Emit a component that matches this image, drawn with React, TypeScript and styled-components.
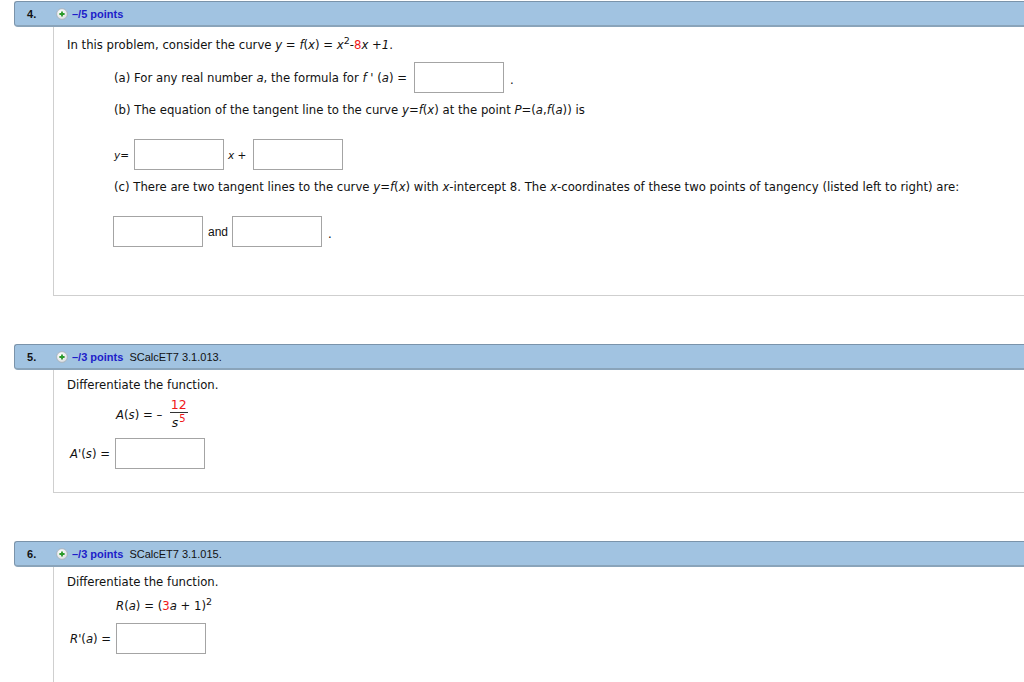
import React from "react";
import styled, { createGlobalStyle } from "styled-components";

const GlobalStyle = createGlobalStyle`
  html, body {
    margin: 0;
    padding: 0;
    background: #ffffff;
    overflow: hidden;
  }
  body {
    font-family: "DejaVu Sans", Verdana, sans-serif;
    font-size: 11.7px;
    color: #111;
  }
`;

// ---------- small pieces ----------

function PlusIcon() {
  return (
    <svg width="12" height="12" viewBox="0 0 12 12">
      <defs>
        <radialGradient id="plusbg" cx="0.4" cy="0.35" r="0.7">
          <stop offset="0" stopColor="#ffffff" />
          <stop offset="1" stopColor="#d8dce0" />
        </radialGradient>
      </defs>
      <circle cx="6" cy="6" r="5.4" fill="url(#plusbg)" stroke="#a4aeb8" strokeWidth="0.8" />
      <path d="M6 3.4v5.2M3.4 6h5.2" stroke="#2a9a2a" strokeWidth="1.8" />
    </svg>
  );
}

interface QuestionProps {
  num: number;
  points: number;
  code?: string;
  top: number;
  padTop: number;
  bodyHeight: number;
  closed?: boolean;
  children: React.ReactNode;
}

function Question({ num, points, code, top, padTop, bodyHeight, closed = true, children }: QuestionProps) {
  return (
    <QuestionWrap $top={top}>
      <Header>
        <Num>{num}.</Num>
        <PlusIcon />
        <Points>–/{points} points</Points>
        {code && <Code>{code}</Code>}
      </Header>
      <Body $padTop={padTop} $height={bodyHeight} $closed={closed}>
        {children}
      </Body>
    </QuestionWrap>
  );
}

function Frac({ num, den }: { num: React.ReactNode; den: React.ReactNode }) {
  return (
    <FracBox>
      <FracNum>{num}</FracNum>
      <FracDen>{den}</FracDen>
    </FracBox>
  );
}

export default function App() {
  return (
    <>
      <GlobalStyle />
      <Page>
        <Question num={4} points={5} top={1} padTop={11} bodyHeight={269}>
          <Line>
            In this problem, consider the curve <I>y</I> = <I>f</I>(<I>x</I>) ={" "}
            <I>x</I>
            <Sup>2</Sup>-<Red>8</Red>
            <I>x</I> +<I>1</I>.
          </Line>
          <Row $indent={47} $mt={10}>
            (a) For any real number <I>a</I>, the formula for <I>f</I> ' (<I>a</I>) =
            <Answer $ml={7} />
            <Dot />
          </Row>
          <Line $indent={47} $mt={10}>
            (b) The equation of the tangent line to the curve <I>y</I>=<I>f</I>(<I>x</I>) at the
            point <I>P</I>=(<I>a</I>,<I>f</I>(<I>a</I>)) is
          </Line>
          <Row $indent={47} $mt={22}>
            <Small><I>y</I>=</Small>
            <Answer $ml={5} />
            <Small $ml={4}><I>x</I> +</Small>
            <Answer $ml={7} />
          </Row>
          <Line $indent={47} $mt={10}>
            (c) There are two tangent lines to the curve <I>y</I>=<I>f</I>(<I>x</I>) with{" "}
            <I>x</I>-intercept 8. The <I>x</I>-coordinates of these two points of tangency (listed
            left to right) are:
          </Line>
          <Row $indent={46} $mt={22}>
            <Answer />
            <AndLabel>and</AndLabel>
            <Answer />
            <Dot />
          </Row>
        </Question>

        <Question num={5} points={3} code="SCalcET7 3.1.013." top={48} padTop={8} bodyHeight={123}>
          <Line>Differentiate the function.</Line>
          <Row $indent={49} $mt={6}>
            <I>A</I>(<I>s</I>) = –&nbsp;&nbsp;
            <Frac
              num={<Red>12</Red>}
              den={
                <>
                  <I>s</I>
                  <SupRed>5</SupRed>
                </>
              }
            />
          </Row>
          <Row $indent={3} $mt={7}>
            <I>A</I>'(<I>s</I>) =
            <Answer $ml={5} />
          </Row>
        </Question>

        <Question num={6} points={3} code="SCalcET7 3.1.015." top={48} padTop={8} bodyHeight={120} closed={false}>
          <Line>Differentiate the function.</Line>
          <Line $indent={49} $mt={10}>
            <I>R</I>(<I>a</I>) = (<Red>3</Red>
            <I>a</I> + 1)
            <Sup>2</Sup>
          </Line>
          <Row $indent={3} $mt={10}>
            <I>R</I>'(<I>a</I>) =
            <Answer $ml={5} />
          </Row>
        </Question>
      </Page>
    </>
  );
}

// -------------------------- style --------------------------

const Page = styled.div`
  padding-left: 14px;
  width: 1010px;
  height: 682px;
  overflow: hidden;
`;

const QuestionWrap = styled.section<{ $top: number }>`
  margin-top: ${(p) => p.$top}px;
`;

const Header = styled.div`
  display: flex;
  align-items: center;
  gap: 4px;
  box-sizing: border-box;
  height: 26px;
  padding-left: 12px;
  background: #a1c3e1;
  border-top: 1px solid #7a93aa;
  border-left: 1px solid #7a93aa;
  border-bottom: 2px solid #8aa4ba;
  border-radius: 3px 0 0 4px;
  font-family: "Liberation Sans", Arial, sans-serif;
  font-size: 11px;
`;

const Num = styled.span`
  font-weight: bold;
  color: #111;
  width: 25px;
`;

const Points = styled.span`
  font-weight: bold;
  color: #1d1dc9;
`;

const Code = styled.span`
  color: #111;
  margin-left: 2px;
`;

const Body = styled.div<{ $padTop: number; $height: number; $closed: boolean }>`
  margin-left: 39px;
  box-sizing: border-box;
  height: ${(p) => p.$height}px;
  padding-top: ${(p) => p.$padTop}px;
  padding-left: 13px;
  border-left: 1px solid #cfcfcf;
  border-bottom: ${(p) => (p.$closed ? "1px solid #cfcfcf" : "none")};
  display: flex;
  flex-direction: column;
  align-items: flex-start;
`;

const Line = styled.div<{ $indent?: number; $mt?: number }>`
  line-height: 14px;
  margin-left: ${(p) => p.$indent ?? 0}px;
  margin-top: ${(p) => p.$mt ?? 0}px;
  white-space: nowrap;
`;

const Row = styled.div<{ $indent?: number; $mt?: number }>`
  display: flex;
  align-items: center;
  margin-left: ${(p) => p.$indent ?? 0}px;
  margin-top: ${(p) => p.$mt ?? 0}px;
  white-space: pre;
  line-height: 14px;
`;

const I = styled.i`
  font-style: italic;
`;

const Red = styled.span`
  color: #f01818;
`;

const Sup = styled.sup`
  font-size: 9.5px;
  line-height: 0;
  vertical-align: 5px;
`;

const SupRed = styled.span`
  color: #f01818;
  font-size: 10px;
  position: relative;
  top: -5px;
  margin-left: 1px;
`;

const Small = styled.span<{ $ml?: number }>`
  font-size: 10.5px;
  margin-left: ${(p) => p.$ml ?? 0}px;
`;

const Answer = styled.div<{ $ml?: number }>`
  box-sizing: border-box;
  width: 90px;
  height: 31px;
  margin-left: ${(p) => p.$ml ?? 0}px;
  border: 1px solid #a4a4a4;
  background: #fff;
`;

const Dot = styled.span`
  &::before {
    content: ".";
  }
  margin-left: 6px;
  padding-top: 4px;
`;

const AndLabel = styled.span`
  font-family: "Liberation Sans", Arial, sans-serif;
  font-size: 12px;
  margin: 0 4px 0 5px;
`;

const FracBox = styled.span`
  display: inline-flex;
  flex-direction: column;
  align-items: center;
`;

const FracNum = styled.span`
  font-size: 12.5px;
  line-height: 13px;
  padding: 0 1px 1px;
  border-bottom: 1px solid #333;
`;

const FracDen = styled.span`
  font-size: 12.5px;
  line-height: 14px;
  padding-top: 3px;
`;
